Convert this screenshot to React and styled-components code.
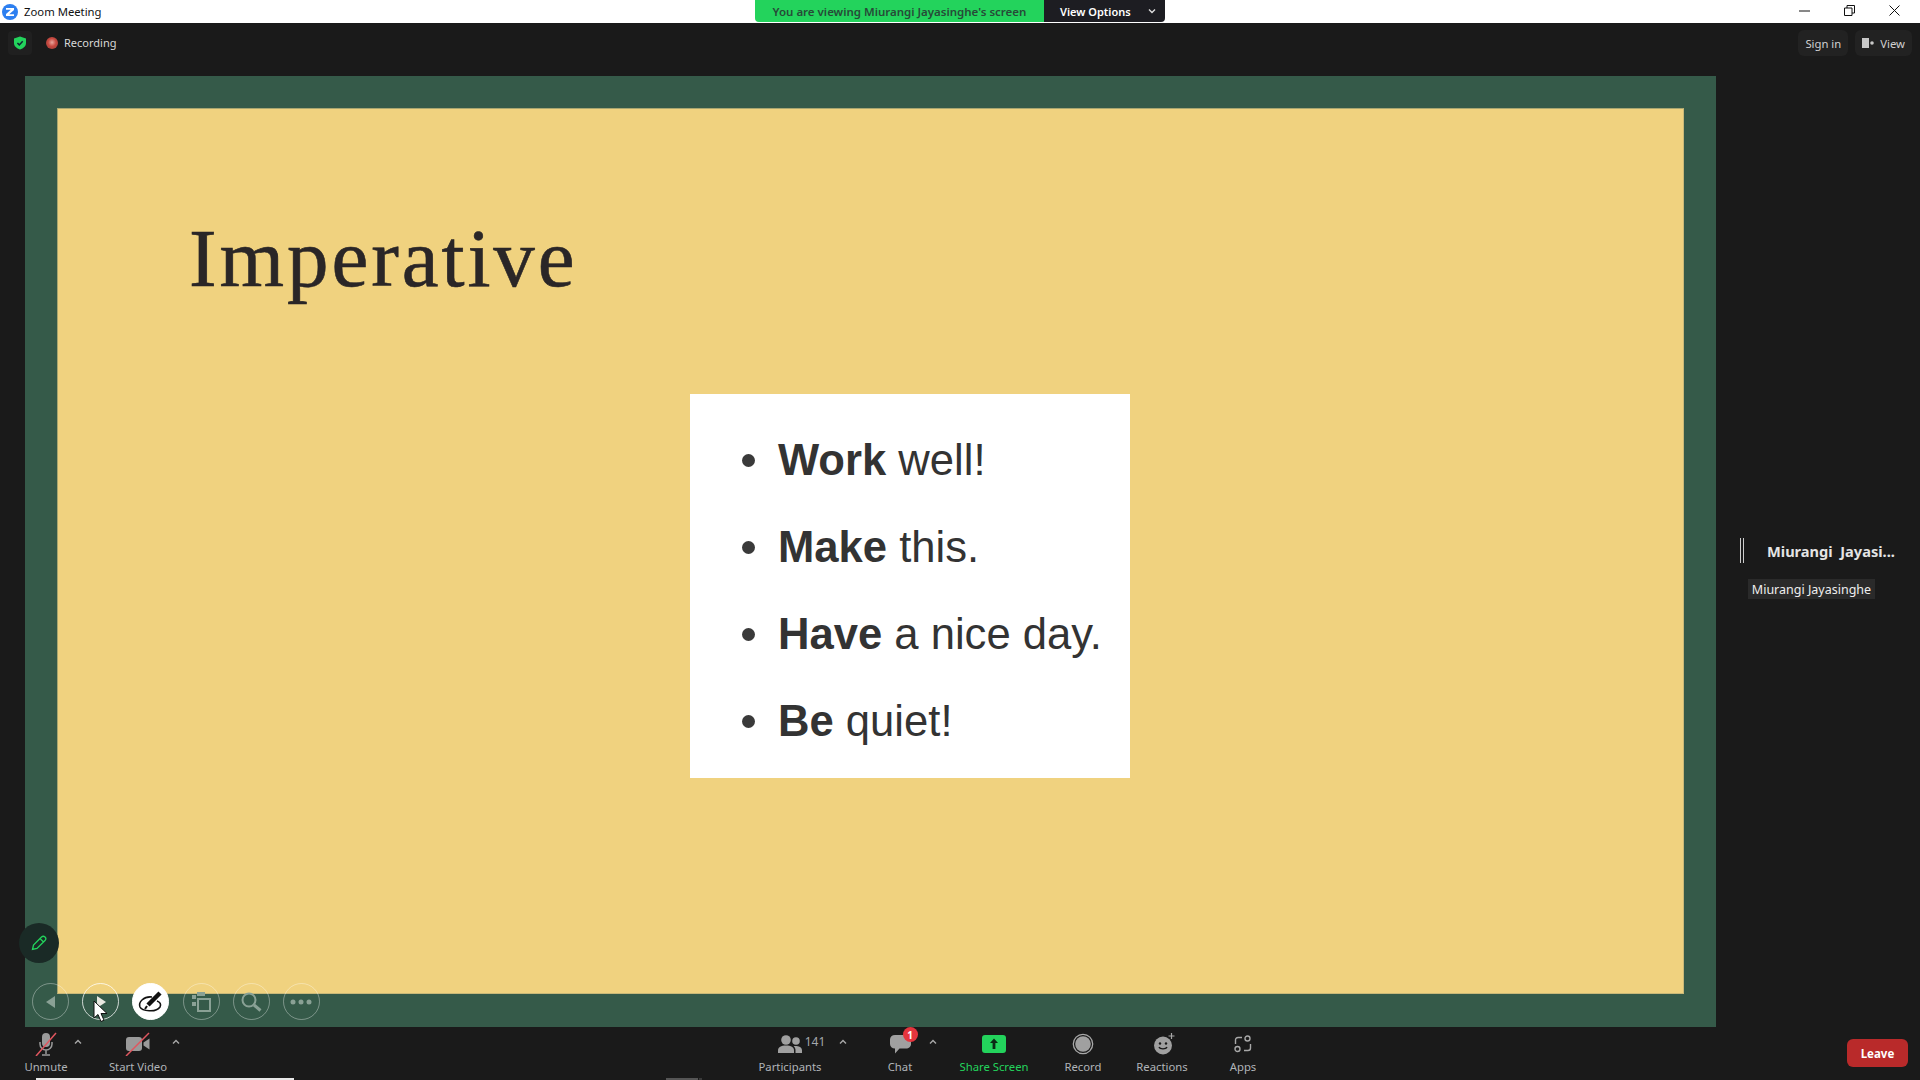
import React from "react"
import styled, { createGlobalStyle } from "styled-components"

const GlobalStyle = createGlobalStyle`
  html, body {
    margin: 0;
    padding: 0;
    background: #1a1a1a;
  }
  * {
    box-sizing: border-box;
  }
`

const UI_FONT = `"Noto Sans", "Open Sans", "Liberation Sans", sans-serif`

const Page = styled.div`
  width: 1920px;
  height: 1080px;
  overflow: hidden;
  position: relative;
  display: flex;
  flex-direction: column;
  background: #1a1a1a;
  font-family: ${UI_FONT};
`

/* title bar */
const TitleBar = styled.div`
  height: 23px;
  flex: none;
  position: relative;
  display: flex;
  align-items: center;
  background: #fff;
  padding-left: 2px;
`
const WindowTitle = styled.span`
  margin-left: 6px;
  font-size: 11.3px;
  color: #111;
`
const WindowButtons = styled.div`
  margin-left: auto;
  display: flex;
  align-items: center;
  gap: 34px;
  padding: 0 20px 2px 0;
  height: 100%;

  svg {
    display: block;
  }
`
const Banner = styled.div`
  position: absolute;
  left: 755px;
  top: 0;
  width: 410px;
  height: 22px;
  display: flex;
  border-radius: 0 0 4px 4px;
  overflow: hidden;
  font-size: 11.5px;
  font-weight: 600;
`
const BannerText = styled.div`
  width: 289px;
  display: flex;
  align-items: center;
  justify-content: center;
  background: #23d35c;
  color: #274a38;
`
const BannerAction = styled.div`
  flex: 1;
  display: flex;
  align-items: center;
  padding-left: 16px;
  background: #1d1d22;
  color: #fff;
  font-size: 11px;

  svg {
    margin-left: 17px;
  }
`

/* top bar */
const TopBar = styled.div`
  height: 53px;
  flex: none;
  display: flex;
  align-items: flex-start;
  padding: 8px 8px 0;
`
const ShieldTile = styled.div`
  width: 24px;
  height: 24px;
  border-radius: 4px;
  background: #202020;
  display: flex;
  align-items: center;
  justify-content: center;
`
const RecordingBadge = styled.div`
  margin-left: 14px;
  height: 23px;
  display: flex;
  align-items: center;
  gap: 6px;
  font-size: 11px;
  color: #d8d8d8;
`
const RecordingDot = styled.span`
  width: 12px;
  height: 12px;
  border-radius: 50%;
  background: radial-gradient(circle at 50% 45%, #e8a79d 0, #c7483f 45%, #93403a 100%);
`
const TopActions = styled.div`
  margin-left: auto;
  display: flex;
  gap: 7px;
`
const TopButton = styled.div`
  height: 26px;
  margin-top: -1px;
  padding: 0 7px;
  display: flex;
  align-items: center;
  gap: 6px;
  border-radius: 6px;
  background: #222;
  font-size: 11.3px;
  color: #d0d0d0;
`

/* shared screen */
const Main = styled.div`
  height: 951px;
  flex: none;
  display: flex;
  padding-left: 25px;
`
const Slide = styled.div`
  width: 1691px;
  position: relative;
  background: #355a49;
  padding: 32px 32px 33px;
`
const SlideBody = styled.div`
  height: 100%;
  background: #f0d27f;
  border: 1px solid #a9a670;
  border-right-color: #c9b878;
  border-bottom-color: #c9b878;
`
const SlideHeader = styled.div`
  height: 285px;
  padding: 101px 0 0 131px;
`
const SlideTitle = styled.h1`
  margin: 0;
  font-family: "Liberation Serif", serif;
  font-weight: 400;
  font-size: 83px;
  line-height: 96px;
  letter-spacing: 2.9px;
  color: #2a2627;
  -webkit-text-stroke: 0.6px #2a2627;
`
const Card = styled.ul`
  list-style: none;
  margin: 0 0 0 632px;
  width: 440px;
  height: 384px;
  padding: 23px 0 0 52px;
  background: #fff;
  font-family: "Liberation Sans", Arial, sans-serif;
  font-size: 43.6px;
  color: #333;
`
const CardRow = styled.li`
  height: 87px;
  line-height: 87px;
  display: flex;
  align-items: center;
  gap: 23px;
  white-space: pre;
`
const Bullet = styled.span`
  width: 13px;
  height: 13px;
  border-radius: 50%;
  background: #3a3a3a;
`

const ShareControls = styled.div`
  position: absolute;
  left: 7px;
  top: 907px;
  display: flex;
  gap: 13.2px;
`
const Round = styled.div`
  width: 37px;
  height: 37px;
  border-radius: 50%;
  display: flex;
  align-items: center;
  justify-content: center;
  border: 1px solid ${p => (p.$active ? "#fff" : p.$lit ? "rgba(255, 255, 255, 0.75)" : "rgba(255, 255, 255, 0.35)")};
  background: ${p => (p.$active ? "#fff" : "transparent")};
`
const PenButton = styled.div`
  position: absolute;
  left: -6px;
  top: 847px;
  width: 40px;
  height: 40px;
  border-radius: 50%;
  background: #1a2a26;
  display: flex;
  align-items: center;
  justify-content: center;
`
const Cursor = styled.svg`
  position: absolute;
  left: 68px;
  top: 924px;
`

/* speaker panel */
const SidePanel = styled.aside`
  flex: 1;
  display: flex;
  flex-direction: column;
  padding: 462px 0 0 24px;
`
const SpeakerRow = styled.div`
  display: flex;
  align-items: center;
  height: 25px;
`
const Divider = styled.div`
  width: 4px;
  height: 25px;
  border-left: 1px solid #ccc;
  border-right: 1px solid #ccc;
`
const SpeakerName = styled.div`
  margin: 0 0 0 23px;
  font-size: 14.6px;
  font-weight: 700;
  white-space: pre;
  color: #e4e4e4;
`
const NameTag = styled.div`
  margin: 16px 0 0 8px;
  width: 127px;
  height: 20px;
  display: flex;
  align-items: center;
  justify-content: center;
  background: #2a2a2a;
  font-size: 12.5px;
  color: #eee;
`

/* toolbar */
const Toolbar = styled.div`
  height: 53px;
  flex: none;
  position: relative;
  display: flex;
  align-items: flex-start;
`
const ToolGroup = styled.div`
  display: flex;
  align-items: flex-start;
  margin-left: ${p => p.$left}px;
`
const ToolItem = styled.div`
  width: ${p => p.$w}px;
  margin-left: ${p => p.$gap || 0}px;
  flex: none;
  display: flex;
  flex-direction: column;
  align-items: center;
  padding-top: 5px;
`
const ToolIcon = styled.div`
  height: 24px;
  display: flex;
  align-items: center;
  justify-content: center;
  position: relative;
  padding-left: ${p => p.$shift || 0}px;
`
const ToolLabel = styled.div`
  margin-top: 3px;
  font-size: 11.3px;
  line-height: 15px;
  white-space: nowrap;
  color: ${p => (p.$accent ? "#23d35c" : "#b0b4b8")};
`
const Caret = styled.svg`
  flex: none;
  margin: 12px 0 0 ${p => p.$gap || 0}px;
`
const Count = styled.span`
  margin-left: 3px;
  margin-bottom: 6px;
  font-size: 12px;
  color: #a4a8ac;
`
const Badge = styled.span`
  position: absolute;
  left: 13px;
  top: -5px;
  width: 15px;
  height: 15px;
  border-radius: 50%;
  display: flex;
  align-items: center;
  justify-content: center;
  background: #e5353e;
  font-size: 10px;
  font-weight: 700;
  color: #fff;
`
const LeaveButton = styled.div`
  margin: 12px 12px 0 auto;
  width: 61px;
  height: 28px;
  border-radius: 6px;
  display: flex;
  align-items: center;
  justify-content: center;
  background: #b92a2a;
  font-size: 11.5px;
  font-weight: 700;
  color: #fff;
`
const ScrollMark = styled.div`
  position: absolute;
  bottom: 0;
  left: ${p => p.$left}px;
  width: ${p => p.$w}px;
  height: 2px;
  background: ${p => p.$color};
`

function UpCaret({ gap }) {
  return (
    <Caret $gap={gap} width="8" height="6" viewBox="0 0 8 6" fill="none" stroke="#a8a8a8" strokeWidth="1.4">
      <path d="M1 4.5 4 1.5 7 4.5" />
    </Caret>
  )
}

function ZoomLogo() {
  return (
    <svg width="16" height="16" viewBox="0 0 16 16">
      <circle cx="8" cy="8" r="8" fill="#2d7ff0" />
      <path d="M4 4h8v2L7.2 10.2H12V12H4v-2l4.8-4.2H4z" fill="#fff" />
    </svg>
  )
}

function Shield() {
  return (
    <svg width="14" height="14" viewBox="0 0 14 14">
      <path d="M7 .5 13 2.6V7c0 3.2-2.6 5.4-6 6.5C3.6 12.4 1 10.2 1 7V2.6z" fill="#23d35c" />
      <path d="M4.4 7 6.3 8.9 9.7 5.3" fill="none" stroke="#123" strokeWidth="1.5" />
    </svg>
  )
}

function MicOff() {
  return (
    <svg width="24" height="24" viewBox="0 0 24 24" fill="none">
      <rect x="8" y="1" width="8" height="14" rx="4" fill="#9a9a9a" />
      <path d="M6 10v2c0 3.4 2.600 6 6 6s6-2.600 6-6v-2M12 18v4M8 23h8" stroke="#9a9a9a" strokeWidth="1.5" />
      <path d="M2 24 22 1" stroke="#e0565f" strokeWidth="1.5" />
    </svg>
  )
}

function VideoOff() {
  return (
    <svg width="26" height="24" viewBox="0 0 26 24" fill="none">
      <rect x="1" y="5" width="16" height="14" rx="3" fill="#9a9a9a" />
      <path d="M18.5 10.5 24.5 6.5v11l-6-4z" fill="#9a9a9a" />
      <path d="M1 24 24 1" stroke="#e0565f" strokeWidth="1.5" />
    </svg>
  )
}

function People() {
  return (
    <svg width="24" height="18" viewBox="0 0 24 18" fill="#a0a0a0">
      <circle cx="8" cy="5" r="4.800" />
      <circle cx="18" cy="6" r="3.800" />
      <path d="M0 15.500C0 12 3 10.500 8 10.500s8 1.500 8 5v2.500H0z" />
      <path d="M17.500 18v-3c0-1.600-.7-2.800-1.800-3.800 3.900-.4 8.300.6 8.300 4.100V18z" />
    </svg>
  )
}

function ChatBubble() {
  return (
    <svg width="21" height="19" viewBox="0 0 21 19" fill="#a0a0a0">
      <path d="M5 0h11c3 0 5 2 5 4.500v4.500c0 2.500-2 4.500-5 4.500H9.500L5 18.500v-5C2 13.500 0 11.500 0 9V4.500C0 2 2 0 5 0z" />
    </svg>
  )
}

function ShareIcon() {
  return (
    <svg width="24" height="18" viewBox="0 0 24 18">
      <rect width="24" height="18" rx="3" fill="#23d35c" />
      <path d="M12 3.500 16 8h-2.600v6h-2.800V8H8z" fill="#0b2a16" />
    </svg>
  )
}

function RecordIcon() {
  return (
    <svg width="22" height="22" viewBox="0 0 22 22">
      <circle cx="11" cy="11" r="9.700" fill="none" stroke="#a8a8a8" strokeWidth="1.300" />
      <circle cx="11" cy="11" r="7.800" fill="#a0a0a0" />
    </svg>
  )
}

function ReactionIcon() {
  return (
    <svg width="24" height="22" viewBox="0 0 24 22">
      <circle cx="10" cy="12.500" r="9" fill="#a0a0a0" />
      <circle cx="7" cy="10.500" r="1.200" fill="#1a1a1a" />
      <circle cx="13" cy="10.500" r="1.200" fill="#1a1a1a" />
      <path d="M6 14c1 2.400 7 2.400 8 0" fill="none" stroke="#1a1a1a" strokeWidth="1.300" />
      <path d="M18.500 0v6M15.500 3h6" stroke="#a8a8a8" strokeWidth="1.200" />
    </svg>
  )
}

function AppsIcon() {
  return (
    <svg width="18" height="18" viewBox="0 0 18 18" fill="none" stroke="#a8a8a8" strokeWidth="1.400">
      <circle cx="13.500" cy="3.500" r="2.500" />
      <circle cx="3.500" cy="14" r="2.500" />
      <path d="M8 2.500H4C2.500 2.500 1.500 3.500 1.500 5v4M10 15.500h4c1.500 0 2.500-1 2.500-2.500V9" />
    </svg>
  )
}

const slideLines = [
  ["Work", " well!"],
  ["Make", " this."],
  ["Have", " a nice day."],
  ["Be", " quiet!"],
]

export default function App() {
  return (
    <Page>
      <GlobalStyle />
      <TitleBar>
        <ZoomLogo />
        <WindowTitle>Zoom Meeting</WindowTitle>
        <Banner>
          <BannerText>You are viewing Miurangi Jayasinghe's screen</BannerText>
          <BannerAction>
            View Options
            <svg width="8" height="6" viewBox="0 0 8 6" fill="none" stroke="#ddd" strokeWidth="1.400">
              <path d="M1 1.500 4 4.500 7 1.500" />
            </svg>
          </BannerAction>
        </Banner>
        <WindowButtons>
          <svg width="11" height="2" viewBox="0 0 11 2"><path d="M0 1h11" stroke="#111" /></svg>
          <svg width="11" height="11" viewBox="0 0 11 11" fill="none" stroke="#111">
            <path d="M.5 3h7.500v7.500H.5zM3 3V.5h7.500V8H8" />
          </svg>
          <svg width="11" height="11" viewBox="0 0 11 11" fill="none" stroke="#111">
            <path d="M.5.5l10 10M10.500.5l-10 10" />
          </svg>
        </WindowButtons>
      </TitleBar>

      <TopBar>
        <ShieldTile><Shield /></ShieldTile>
        <RecordingBadge>
          <RecordingDot />
          Recording
        </RecordingBadge>
        <TopActions>
          <TopButton>Sign in</TopButton>
          <TopButton>
            <svg width="12" height="12" viewBox="0 0 12 12">
              <rect y="1" width="7" height="10" fill="#c8c8c8" />
              <circle cx="10" cy="6" r="1.800" fill="#c8c8c8" />
            </svg>
            View
          </TopButton>
        </TopActions>
      </TopBar>

      <Main>
        <Slide>
          <SlideBody>
            <SlideHeader>
              <SlideTitle>Imperative</SlideTitle>
            </SlideHeader>
            <Card>
              {slideLines.map(([strong, rest]) => (
                <CardRow key={strong}>
                  <Bullet />
                  <span><b>{strong}</b>{rest}</span>
                </CardRow>
              ))}
            </Card>
          </SlideBody>
          <PenButton>
            <svg width="16" height="16" viewBox="0 0 16 16" fill="none" stroke="#23d35c" strokeWidth="1.300">
              <path d="M1.500 14.500 2.500 10 10.500 2c1-1 2.500-1 3.500 0s1 2.500 0 3.500L6 13.500zM9 3.500 12.500 7" />
            </svg>
          </PenButton>
          <ShareControls>
            <Round>
              <svg width="14" height="16" viewBox="0 0 14 16"><path d="M11 2v12L2 8z" fill="#8aa195" /></svg>
            </Round>
            <Round $lit>
              <svg width="14" height="16" viewBox="0 0 14 16"><path d="M3 2v12l9-6z" fill="#e8e8e0" /></svg>
            </Round>
            <Round $active>
              <svg width="30" height="30" viewBox="0 0 30 30" fill="none" stroke="#111">
                <path d="M12 18 24 6" strokeWidth="4.500" />
                <path d="M11 19 9 22" strokeWidth="2" />
                <path d="M16 10C8 9 2 15 4 20c2 4 16 6 20 0 1.500-2.500 0-5-3-6" strokeWidth="1.600" />
              </svg>
            </Round>
            <Round>
              <svg width="24" height="24" viewBox="0 0 24 24" fill="none" stroke="#8aa195" strokeWidth="2">
                <path d="M9 9h12v12H9z" />
                <path d="M8 2h8v4H8zM3 5h4v4H3zM3 12h4v4H3z" fill="#8aa195" strokeWidth="0" />
              </svg>
            </Round>
            <Round>
              <svg width="24" height="24" viewBox="0 0 24 24" fill="none" stroke="#8aa195" strokeWidth="2">
                <circle cx="10" cy="10" r="6.500" />
                <path d="M15 15l6.500 5.500" strokeWidth="3" />
              </svg>
            </Round>
            <Round>
              <svg width="24" height="8" viewBox="0 0 24 8" fill="#8aa195">
                <circle cx="4" cy="4" r="2.500" />
                <circle cx="12" cy="4" r="2.500" />
                <circle cx="20" cy="4" r="2.500" />
              </svg>
            </Round>
          </ShareControls>
          <Cursor width="16" height="23" viewBox="0 0 16 23">
            <path d="M1 1v17l4-3.500 3 7 3-1.300-3-6.700h6z" fill="#fff" stroke="#111" />
          </Cursor>
        </Slide>
        <SidePanel>
          <SpeakerRow>
            <Divider />
            <SpeakerName>Miurangi  Jayasi...</SpeakerName>
          </SpeakerRow>
          <NameTag>Miurangi Jayasinghe</NameTag>
        </SidePanel>
      </Main>

      <Toolbar>
        <ToolGroup $left={16}>
          <ToolItem $w={60}>
            <ToolIcon><MicOff /></ToolIcon>
            <ToolLabel>Unmute</ToolLabel>
          </ToolItem>
          <UpCaret gap={-2} />
          <ToolItem $w={70} $gap={21}>
            <ToolIcon><VideoOff /></ToolIcon>
            <ToolLabel>Start Video</ToolLabel>
          </ToolItem>
          <UpCaret gap={-1} />
        </ToolGroup>
        <ToolGroup $left={570}>
          <ToolItem $w={80}>
            <ToolIcon $shift={23}><People /><Count>141</Count></ToolIcon>
            <ToolLabel>Participants</ToolLabel>
          </ToolItem>
          <UpCaret gap={9} />
          <ToolItem $w={60} $gap={23}>
            <ToolIcon>
              <ChatBubble />
              <Badge>1</Badge>
            </ToolIcon>
            <ToolLabel>Chat</ToolLabel>
          </ToolItem>
          <UpCaret gap={-1} />
          <ToolItem $w={80} $gap={17}>
            <ToolIcon><ShareIcon /></ToolIcon>
            <ToolLabel $accent>Share Screen</ToolLabel>
          </ToolItem>
          <ToolItem $w={60} $gap={19}>
            <ToolIcon><RecordIcon /></ToolIcon>
            <ToolLabel>Record</ToolLabel>
          </ToolItem>
          <ToolItem $w={70} $gap={14}>
            <ToolIcon $shift={6}><ReactionIcon /></ToolIcon>
            <ToolLabel>Reactions</ToolLabel>
          </ToolItem>
          <ToolItem $w={50} $gap={21}>
            <ToolIcon><AppsIcon /></ToolIcon>
            <ToolLabel>Apps</ToolLabel>
          </ToolItem>
        </ToolGroup>
        <LeaveButton>Leave</LeaveButton>
        <ScrollMark $left={36} $w={258} $color="#e8e8e8" />
        <ScrollMark $left={666} $w={32} $color="#555" />
        <ScrollMark $left={699} $w={3} $color="#3a3a3a" />
      </Toolbar>
    </Page>
  )
}
